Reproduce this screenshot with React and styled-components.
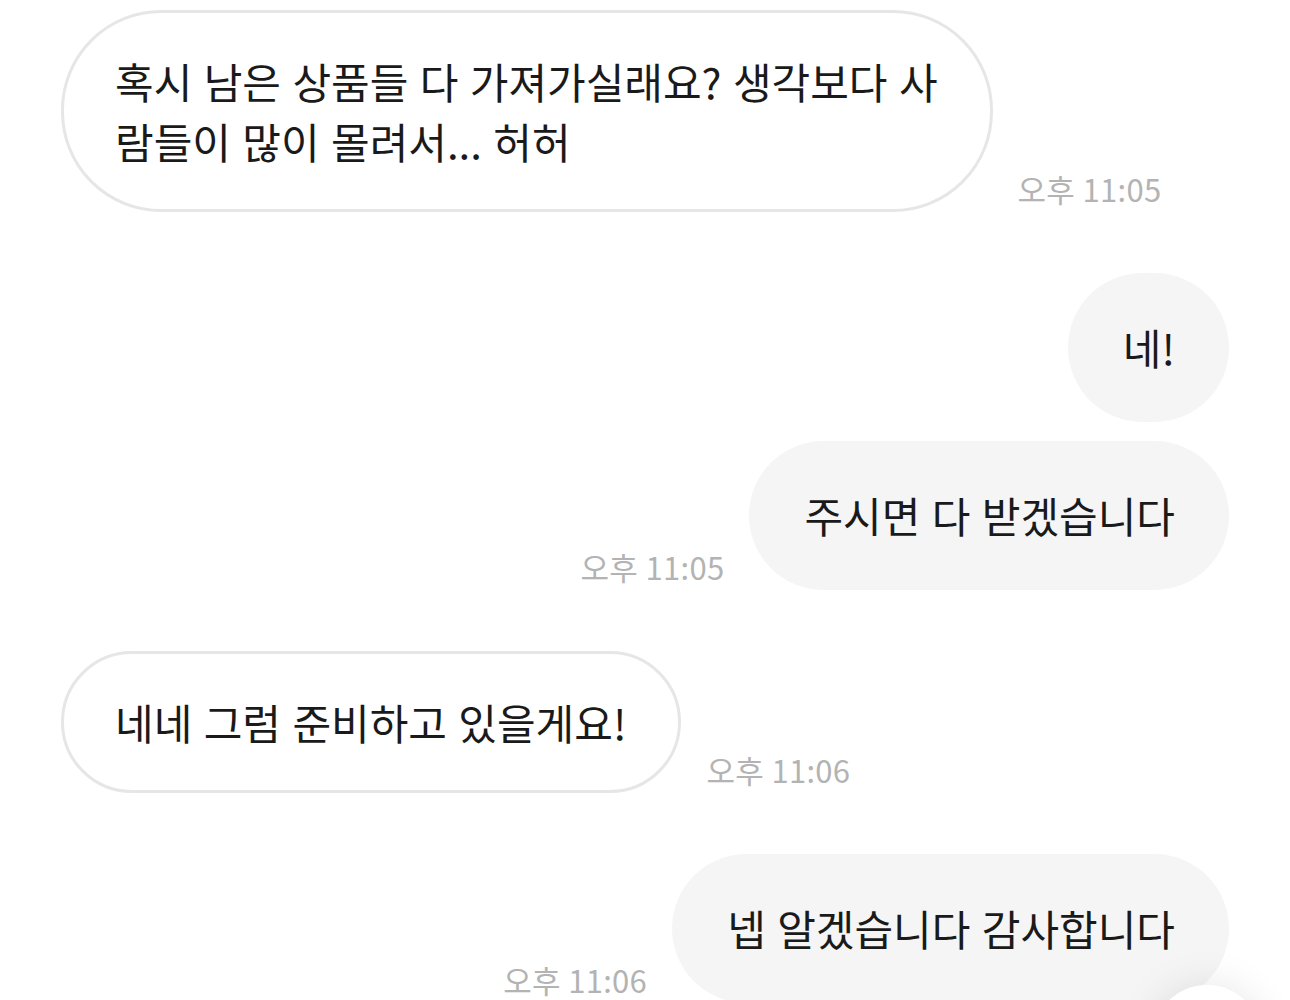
import styled, { createGlobalStyle, css } from "styled-components";

const GlobalStyle = createGlobalStyle`
  html, body {
    margin: 0;
    padding: 0;
    background: #ffffff;
  }
  body {
    font-family: "Noto Sans CJK KR", "Noto Sans", sans-serif;
    overflow: hidden;
  }
`;

const Thread = styled.div`
  display: flex;
  flex-direction: column;
  padding: 10px 61px 0 61px;
  height: 1000px;
  box-sizing: border-box;
  overflow: hidden;
`;

const Row = styled.div`
  display: flex;
  align-items: flex-end;
  gap: 25px;
  justify-content: ${(p) => (p.mine ? "flex-end" : "flex-start")};
  margin-top: ${(p) => (p.grouped ? "19px" : "61px")};

  &:first-child {
    margin-top: 0;
  }
`;

const Bubble = styled.div`
  box-sizing: border-box;
  font-size: 42px;
  line-height: 60px;
  letter-spacing: 0;
  word-spacing: 2px;
  color: #1a1a1a;
  white-space: pre-line;
  border-radius: 100px;

  ${(p) =>
    p.mine
      ? css`
          background: #f5f5f5;
          padding: 44px 54px 45px 55px;
        `
      : css`
          background: #ffffff;
          border: 3px solid #e6e6e6;
          padding: 38px 52px 38px 51px;
        `}
`;

const Time = styled.span`
  font-size: 31px;
  line-height: 40px;
  color: #b3b3b3;
  letter-spacing: 0.01em;
  white-space: nowrap;
  margin-bottom: 3px;
`;

const Fab = styled.div`
  position: fixed;
  right: 28px;
  bottom: -95px;
  width: 110px;
  height: 110px;
  border-radius: 50%;
  background: #ffffff;
  box-shadow: 0 0 40px rgba(0, 0, 0, 0.1);
`;

const messages = [
  {
    id: 1,
    mine: false,
    text: "혹시 남은 상품들 다 가져가실래요? 생각보다 사\n람들이 많이 몰려서... 허허",
    time: "오후 11:05",
  },
  { id: 2, mine: true, text: "네!" },
  { id: 3, mine: true, grouped: true, text: "주시면 다 받겠습니다", time: "오후 11:05" },
  { id: 4, mine: false, text: "네네 그럼 준비하고 있을게요!", time: "오후 11:06" },
  { id: 5, mine: true, text: "넵 알겠습니다 감사합니다", time: "오후 11:06" },
];

export default function App() {
  return (
    <>
      <GlobalStyle />
      <Thread>
        {messages.map((m) => (
          <Row key={m.id} mine={m.mine} grouped={m.grouped}>
            {m.mine && m.time && <Time>{m.time}</Time>}
            <Bubble mine={m.mine}>{m.text}</Bubble>
            {!m.mine && m.time && <Time>{m.time}</Time>}
          </Row>
        ))}
      </Thread>
      <Fab />
    </>
  );
}
